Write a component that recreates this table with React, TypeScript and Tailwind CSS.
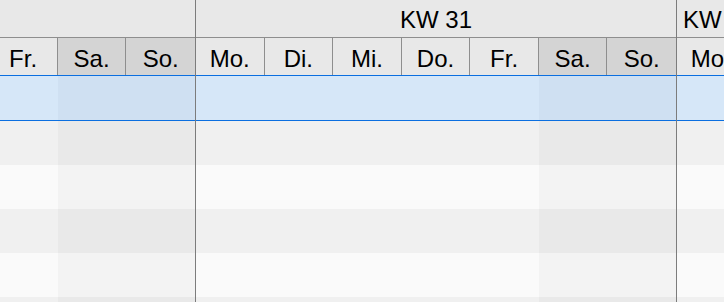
import React from 'react';

interface Week {
  label: string;
  // label pinned to the left edge when the week is scrolled in from the right
  pinned?: boolean;
}

const DAYS = ['Mo.', 'Di.', 'Mi.', 'Do.', 'Fr.', 'Sa.', 'So.'];
const WEEKS: Week[] = [{ label: 'KW 30' }, { label: 'KW 31' }, { label: 'KW 32', pinned: true }];
const ROWS = 6;

const isWeekend = (i: number) => i >= 5;

const WeekColumn: React.FC<{ week: Week; first?: boolean }> = ({ week, first }) => {
  return (
    <div
      className={`flex-none w-[481px] flex flex-col border-r border-[#7c7c7c] ${first ? '-ml-[285px]' : ''}`}
    >
      {/* week label */}
      <div
        className={`shrink-0 h-[38px] flex items-center pt-[3px] border-b border-[#8e8e8e] bg-[#e8e8e8] text-[24px] text-black ${
          week.pinned ? 'justify-start pl-[6px]' : 'justify-center'
        }`}
      >
        {week.label}
      </div>

      {/* day names */}
      <div className="shrink-0 h-[37px] grid grid-cols-7">
        {DAYS.map((d, i) => (
          <div
            key={d}
            className={`flex items-center justify-center pt-[3px] text-[24px] text-black ${
              i < 6 ? 'border-r border-[#8e8e8e]' : ''
            } ${isWeekend(i) ? 'bg-[#d4d4d4]' : 'bg-[#e8e8e8]'}`}
          >
            {d}
          </div>
        ))}
      </div>

      {/* selected row */}
      <div className="shrink-0 h-[46px] grid grid-cols-7 border-y border-[#0b6fe0]">
        {DAYS.map((d, i) => (
          <div key={d} className={isWeekend(i) ? 'bg-[#cfe0f2]' : 'bg-[#d6e7f8]'} />
        ))}
      </div>

      {/* rest of the rows, alternating */}
      {Array.from({ length: ROWS }).map((_, r) => (
        <div key={r} className="shrink-0 h-[44px] grid grid-cols-7">
          {DAYS.map((d, i) => {
            const odd = r % 2 === 0;
            const cls = odd
              ? isWeekend(i)
                ? 'bg-[#e9e9e9]'
                : 'bg-[#f0f0f0]'
              : isWeekend(i)
                ? 'bg-[#f3f3f3]'
                : 'bg-[#fafafa]';
            return <div key={d} className={cls} />;
          })}
        </div>
      ))}
    </div>
  );
};

export default function App() {
  return (
    <div
      className="w-[724px] h-[302px] overflow-hidden flex bg-[#fafafa]"
      style={{ fontFamily: '"Liberation Sans", Arial, sans-serif' }}
    >
      {WEEKS.map((w, i) => (
        <WeekColumn key={w.label} week={w} first={i === 0} />
      ))}
    </div>
  );
}
